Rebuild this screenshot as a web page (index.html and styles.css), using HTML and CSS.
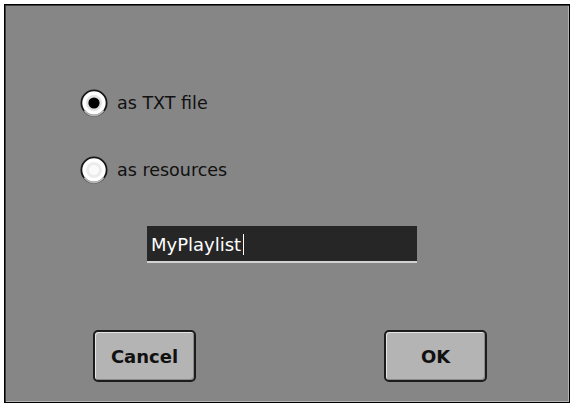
FILE: index.html
```html
<!DOCTYPE html>
<html>
<head>
<meta charset="utf-8">
<link rel="stylesheet" href="styles.css">
</head>
<body>
<div class="window">
  <div class="options">
    <label class="option">
      <svg class="radio" width="28" height="28" viewBox="0 0 28 28">
        <circle cx="14" cy="14" r="12.6" fill="#ffffff" stroke="#161616" stroke-width="1.8"/>
        <path d="M4.5 21.5 A11.5 11.5 0 0 0 23.5 21.5" fill="none" stroke="#b8b8b8" stroke-width="1.8"/>
        <circle cx="14" cy="14" r="8" fill="#e2e2e2"/>
        <circle cx="14" cy="14" r="5.6" fill="#000000"/>
      </svg>
      <span class="label">as TXT file</span>
    </label>
    <label class="option">
      <svg class="radio" width="28" height="28" viewBox="0 0 28 28">
        <circle cx="14" cy="14" r="12.6" fill="#ffffff" stroke="#161616" stroke-width="1.8"/>
        <path d="M4.5 21.5 A11.5 11.5 0 0 0 23.5 21.5" fill="none" stroke="#b8b8b8" stroke-width="1.8"/>
        <circle cx="14" cy="14" r="8" fill="#ececec"/>
        <circle cx="14" cy="14" r="5" fill="#fafafa"/>
      </svg>
      <span class="label">as resources</span>
    </label>
  </div>
  <div class="field-row">
    <div class="field"><span class="value">MyPlaylist</span><span class="caret"></span></div>
  </div>
  <div class="buttons">
    <div class="button cancel">Cancel</div>
    <div class="button ok">OK</div>
  </div>
</div>
</body>
</html>
```

FILE: styles.css
```css
html, body {
  margin: 0;
  padding: 0;
  background: #ffffff;
}
body {
  padding: 4px;
  font-family: "DejaVu Sans", "Liberation Sans", sans-serif;
}
.window {
  box-sizing: border-box;
  width: 566px;
  height: 399px;
  background: #868686;
  border: 1px solid #000000;
  box-shadow: inset 1px 1px 0 #3c3c3c, inset -1px -1px 0 #b4b4b4;
  display: flex;
  flex-direction: column;
  padding: 84px 0 0 75px;
}
.options {
  display: flex;
  flex-direction: column;
  gap: 39px;
}
.option {
  display: flex;
  align-items: center;
  gap: 9px;
  height: 28px;
}
.radio {
  display: block;
}
.label {
  font-size: 17.5px;
  color: #111111;
}
.field-row {
  margin-top: 42px;
  padding-left: 67px;
}
.field {
  width: 270px;
  height: 37px;
  box-sizing: border-box;
  background: #262626;
  border-bottom: 2px solid #d2d2d2;
  display: flex;
  align-items: center;
  padding: 1px 0 0 4px;
}
.value {
  color: #ffffff;
  font-size: 18px;
}
.caret {
  width: 1px;
  height: 21px;
  background: #ffffff;
  margin-left: 2px;
}
.buttons {
  display: flex;
  margin-top: 67px;
  padding-left: 13px;
  gap: 188px;
}
.button {
  box-sizing: border-box;
  width: 103px;
  height: 52px;
  background: #b4b4b4;
  border: 2px solid #1c1c1c;
  border-radius: 5px;
  box-shadow: inset 1px 1px 0 #e6e6e6, inset -1px -1px 0 #8a8a8a;
  display: flex;
  align-items: center;
  justify-content: center;
  font-weight: bold;
  font-size: 18px;
  color: #111111;
}
```
